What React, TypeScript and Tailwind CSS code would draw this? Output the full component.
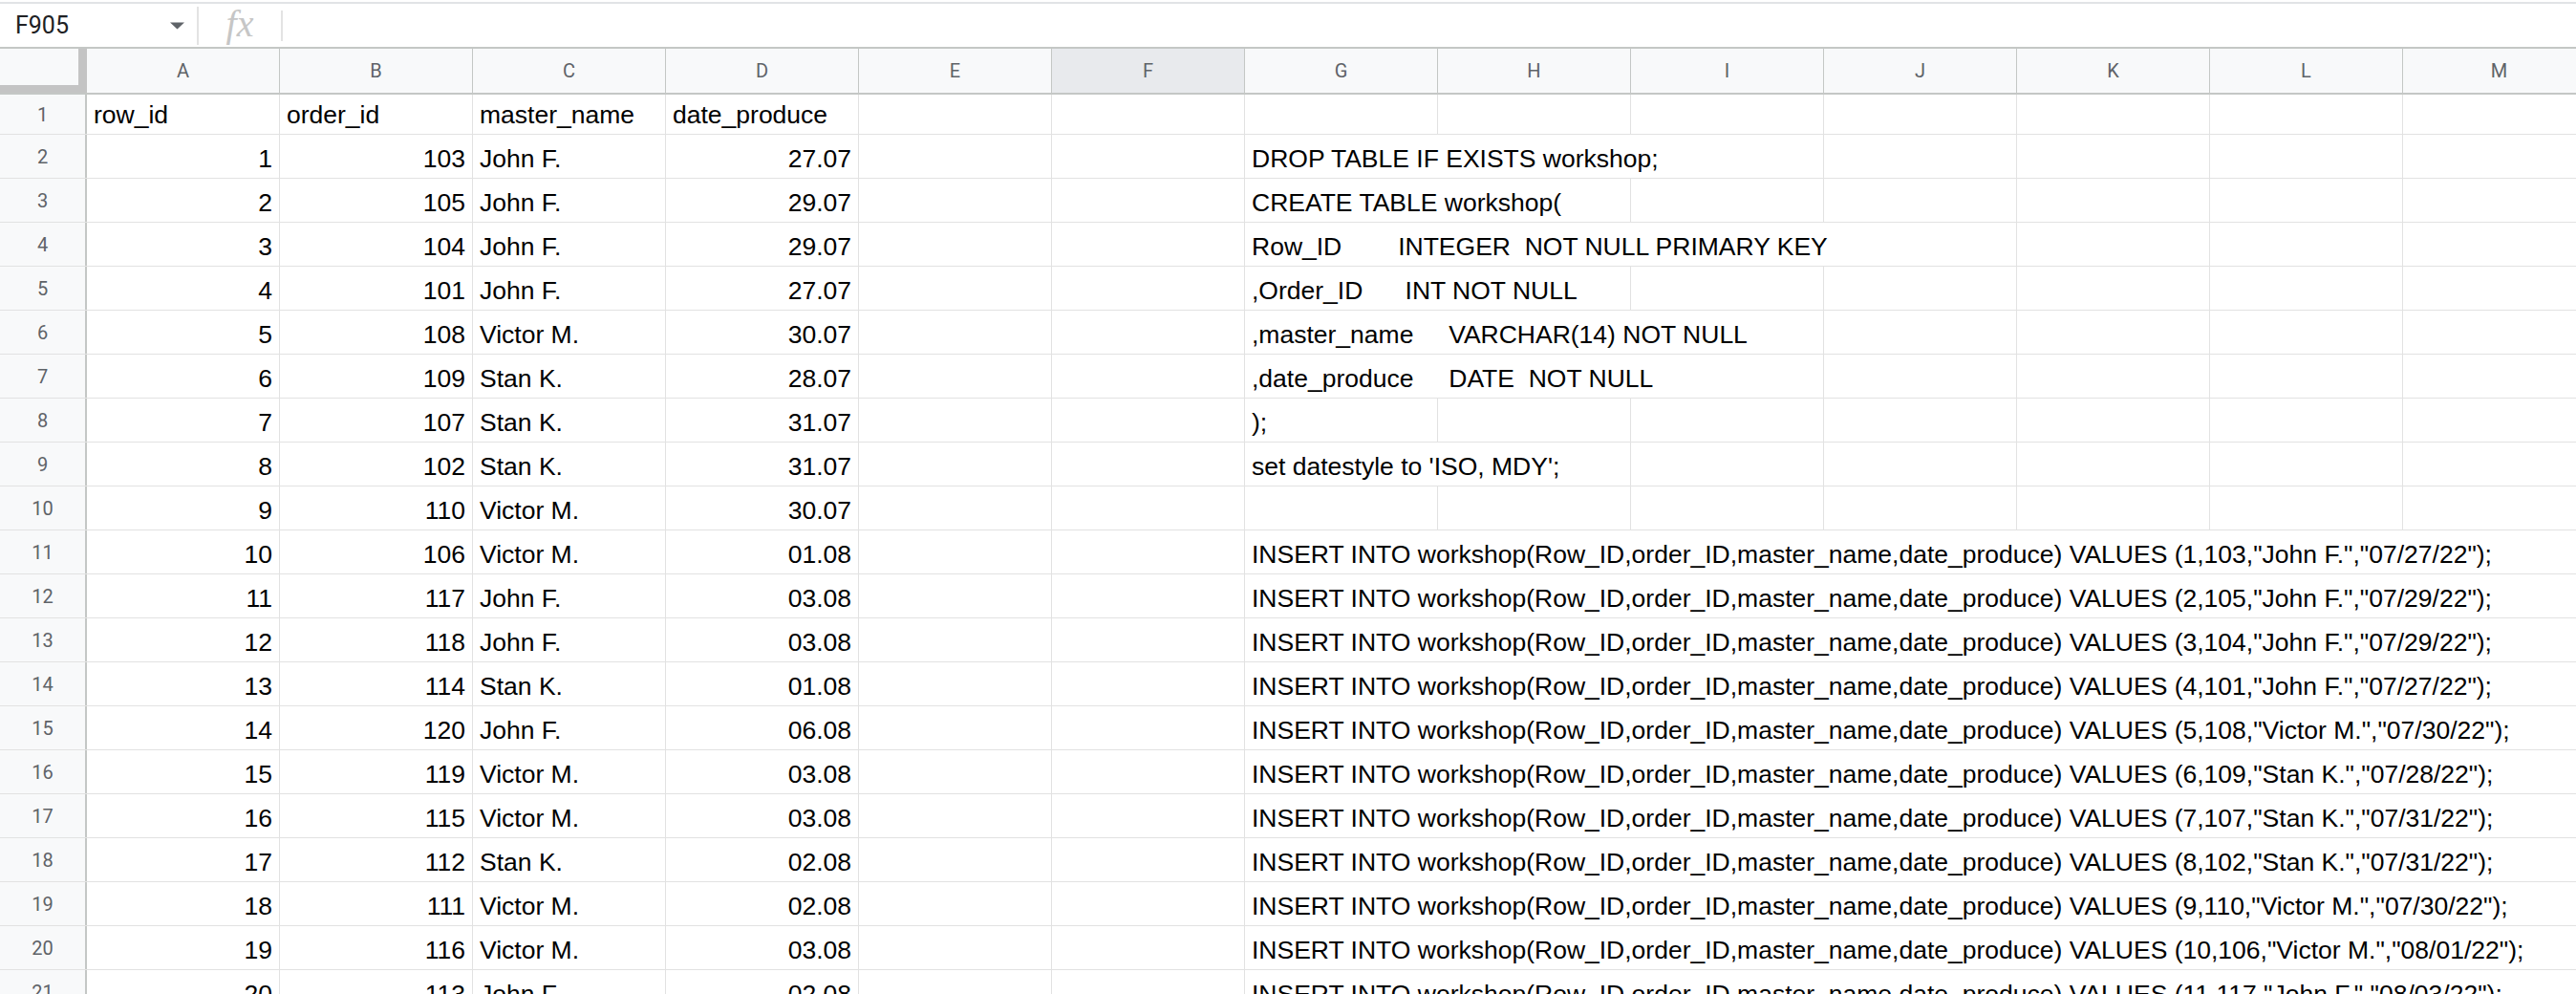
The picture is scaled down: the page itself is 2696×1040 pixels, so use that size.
import React from "react";

const COLS = ["A", "B", "C", "D", "E", "F", "G", "H", "I", "J", "K", "L", "M"];

// row_id, order_id, master_name, date_produce
const data: [number, number, string, string][] = [
  [1, 103, "John F.", "27.07"],
  [2, 105, "John F.", "29.07"],
  [3, 104, "John F.", "29.07"],
  [4, 101, "John F.", "27.07"],
  [5, 108, "Victor M.", "30.07"],
  [6, 109, "Stan K.", "28.07"],
  [7, 107, "Stan K.", "31.07"],
  [8, 102, "Stan K.", "31.07"],
  [9, 110, "Victor M.", "30.07"],
  [10, 106, "Victor M.", "01.08"],
  [11, 117, "John F.", "03.08"],
  [12, 118, "John F.", "03.08"],
  [13, 114, "Stan K.", "01.08"],
  [14, 120, "John F.", "06.08"],
  [15, 119, "Victor M.", "03.08"],
  [16, 115, "Victor M.", "03.08"],
  [17, 112, "Stan K.", "02.08"],
  [18, 111, "Victor M.", "02.08"],
  [19, 116, "Victor M.", "03.08"],
  [20, 113, "John F.", "02.08"],
  [21, 121, "Stan K.", "04.08"],
];

const isoDates = ["07/27/22", "07/29/22", "07/29/22", "07/27/22", "07/30/22", "07/28/22", "07/31/22", "07/31/22", "07/30/22", "08/01/22", "08/03/22", "08/03/22"];

const inserts = data.slice(0, 12).map(
  (r, i) =>
    `INSERT INTO workshop(Row_ID,order_ID,master_name,date_produce) VALUES (${r[0]},${r[1]},"${r[2]}","${isoDates[i]}");`
);

// text in column G, with how many columns it spills over (0 = rest of the sheet)
const sqlRows: [string, number][] = [
  ["", 1],
  ["DROP TABLE IF EXISTS workshop;", 3],
  ["CREATE TABLE workshop(", 2],
  ["Row_ID        INTEGER  NOT NULL PRIMARY KEY", 4],
  [",Order_ID      INT NOT NULL", 2],
  [",master_name     VARCHAR(14) NOT NULL", 3],
  [",date_produce     DATE  NOT NULL", 3],
  [");", 1],
  ["set datestyle to 'ISO, MDY';", 2],
  ["", 1],
  ...inserts.map((s) => [s, 0] as [string, number]),
];

const Cell = ({
  children,
  right,
  width = 202,
  edge = true,
}: {
  children?: React.ReactNode;
  right?: boolean;
  width?: number;
  edge?: boolean;
}) => (
  <div
    className={`shrink-0 h-full flex items-end px-[7px] pb-[5px] overflow-hidden whitespace-pre leading-[30px] ${
      edge ? "border-r border-[#e2e2e2]" : ""
    } ${right ? "justify-end" : "justify-start"}`}
    style={{ width }}
  >
    {children}
  </div>
);

const RowHead = ({ n }: { n: number }) => (
  <div className="shrink-0 w-[91px] h-full flex items-center justify-center bg-[#f8f9fa] border-r-2 border-[#c4c7c5] font-['Roboto'] text-[20px] text-[#5f6368]">
    {n}
  </div>
);

const SqlCells = ({ text, span }: { text: string; span: number }) => {
  if (span === 0) {
    return (
      <Cell width={202 * 7} edge={false}>
        {text}
      </Cell>
    );
  }
  const rest = 7 - span;
  return (
    <>
      <Cell width={202 * span}>{text}</Cell>
      {Array.from({ length: rest }).map((_, i) => (
        <Cell key={i} />
      ))}
    </>
  );
};

export default function App() {
  return (
    <div className="w-[2696px] h-[1040px] overflow-hidden bg-white pt-[2px] text-black">
      {/* formula bar */}
      <div className="h-[47px] border-t-2 border-[#e1e3e6] flex items-center">
        <div className="w-[206px] shrink-0 flex items-center justify-between pl-[16px] pr-[13px]">
          <span className="font-['Roboto'] text-[25px] text-[#202124] leading-none">F905</span>
          <svg width="15" height="8" viewBox="0 0 15 8">
            <path d="M0 0.5 H15 L7.5 7.5 Z" fill="#5f6368" />
          </svg>
        </div>
        <div className="w-[2px] h-[40px] bg-[#e3e3e3] shrink-0" />
        <div className="w-[86px] shrink-0 flex items-center justify-center">
          <span className="font-['Liberation_Serif'] italic text-[40px] text-[#c6c6c6] leading-none pb-[4px]">fx</span>
        </div>
        <div className="w-[2px] h-[32px] bg-[#e3e3e3] shrink-0" />
      </div>

      {/* column headers */}
      <div className="h-[50px] flex border-t-2 border-b-2 border-[#c4c7c5] font-['Roboto'] text-[20px] text-[#5f6368]">
        <div className="shrink-0 w-[91px] h-full bg-[#f8f9fa] border-r-[9px] border-b-[8px] border-[#c4c4c4]" />
        {COLS.map((c) => (
          <div
            key={c}
            className={`shrink-0 w-[202px] h-full flex items-center justify-center border-r border-[#c4c7c5] ${
              c === "F" ? "bg-[#e8eaed]" : "bg-[#f8f9fa]"
            }`}
          >
            {c}
          </div>
        ))}
      </div>

      <div className="font-['Liberation_Sans',Arial,sans-serif] text-[26.5px]">
        {/* header row */}
        <div className="h-[42px] flex border-b border-[#e2e2e2]">
          <RowHead n={1} />
          <Cell>row_id</Cell>
          <Cell>order_id</Cell>
          <Cell>master_name</Cell>
          <Cell>date_produce</Cell>
          <Cell />
          <Cell />
          <SqlCells text="" span={1} />
        </div>
        {data.map((r, i) => {
          const sql = sqlRows[i + 1] ?? ["", 0];
          return (
            <div key={i} className="h-[46px] flex border-b border-[#e2e2e2]">
              <RowHead n={i + 2} />
              <Cell right>{r[0]}</Cell>
              <Cell right>{r[1]}</Cell>
              <Cell>{r[2]}</Cell>
              <Cell right>{r[3]}</Cell>
              <Cell />
              <Cell />
              <SqlCells text={sql[0]} span={sql[1]} />
            </div>
          );
        })}
      </div>
    </div>
  );
}
